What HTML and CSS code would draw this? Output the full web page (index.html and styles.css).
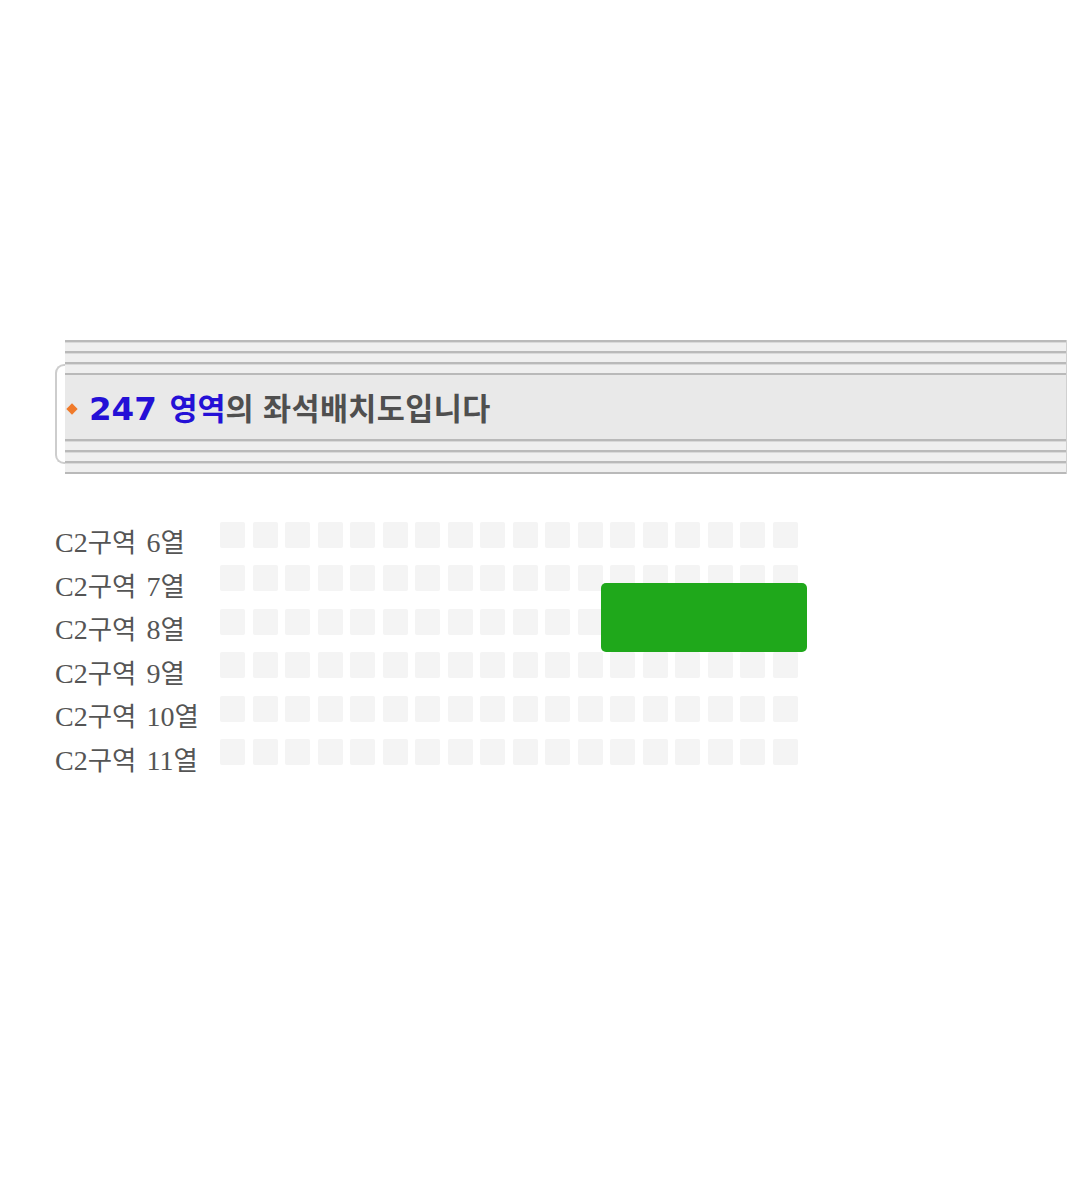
FILE: index.html
```html
<!DOCTYPE html>
<html lang="ko">
<head>
  <meta charset="UTF-8">
  <title>좌석배치도</title>
  <link rel="stylesheet" href="styles.css">
</head>
<body>
  <!-- Area title bar -->
  <div class="area-head">
    <div class="cap"></div>
    <div class="bar">
      <div class="stripes"></div>
      <div class="title">
        <span class="dot"></span>
        <span class="area-name"><span class="num">247</span> 영역</span><span class="rest">의 좌석배치도입니다</span>
      </div>
      <div class="stripes bottom"></div>
    </div>
  </div>

  <!-- Seat rows -->
  <div class="seat-map" id="seat-map">
    <div class="picked"></div>
  </div>

  <script>
    const rows = [6, 7, 8, 9, 10, 11];
    const seatsPerRow = 18;
    const map = document.getElementById('seat-map');

    rows.forEach(row => {
      const line = document.createElement('div');
      line.className = 'seat-row';
      line.innerHTML = `<div class="label">C2<span class="ko">구역</span> ${row}<span class="ko">열</span></div>`;
      const seats = document.createElement('div');
      seats.className = 'seats';
      for (let i = 0; i < seatsPerRow; i++) {
        const s = document.createElement('div');
        s.className = 'seat';
        seats.appendChild(s);
      }
      line.appendChild(seats);
      map.appendChild(line);
    });
  </script>
</body>
</html>
```

FILE: styles.css
```css
body {
  margin: 0;
  background-color: #fff;
  font-family: "Liberation Serif", "Noto Sans CJK KR", serif;
}

/* title bar */
.area-head {
  display: flex;
  margin: 340px 0 0 55px;
  height: 134px;
}
.cap {
  width: 10px;
  position: relative;
}
.cap::before {
  content: "";
  position: absolute;
  left: 0;
  top: 24px;
  width: 8px;
  height: 96px;
  border: 2px solid #cdcdcd;
  border-right: none;
  border-radius: 9px 0 0 9px;
}
.cap::after {
  content: "";
  position: absolute;
  left: 2px;
  top: 35px;
  width: 8px;
  height: 10px;
  background: #fff;
  box-shadow: 0 53px 0 #fff;
}
.bar {
  flex: 1;
  display: flex;
  flex-direction: column;
  border-right: 1px solid #d0d0d0;
}
.stripes {
  height: 33px;
  background: repeating-linear-gradient(to bottom, #b9b9b9 0 2px, #d9d9d9 2px 3px, #efefef 3px 11px);
}
.stripes.bottom {
  border-bottom: 2px solid #b9b9b9;
}
.title {
  height: 65px;
  background-color: #e9e9e9;
  border-top: 2px solid #b9b9b9;
  display: flex;
  align-items: center;
  font-family: "DejaVu Sans", "Noto Sans CJK KR", sans-serif;
  font-size: 30.5px;
}
.dot {
  width: 8px;
  height: 8px;
  background-color: #f07a2a;
  transform: rotate(45deg);
  margin: 4px 13px 0 3px;
}
.area-name {
  color: #2410d6;
  font-weight: bold;
  word-spacing: 2px;
}
.num {
  font-size: 32.5px;
}
.rest {
  color: #4f4f4f;
  font-weight: bold;
  font-family: "Noto Sans CJK KR", sans-serif;
  letter-spacing: 0.4px;
}

/* seats */
.seat-map {
  position: relative;
  margin: 39px 0 0 55px;
}
.seat-row {
  display: flex;
  align-items: center;
  height: 43.5px;
}
.label {
  width: 165px;
  font-size: 28px;
  color: #555;
  margin-top: 12px;
  word-spacing: 3px;
}
.label .ko {
  font-size: 26.5px;
}
.seats {
  display: flex;
  gap: 7.5px;
}
.seat {
  width: 25px;
  height: 26px;
  border-radius: 2px;
  background-color: #f4f4f4;
}
.picked {
  position: absolute;
  left: 546px;
  top: 70px;
  width: 206px;
  height: 69px;
  border-radius: 5px;
  background-color: #1fa81b;
  z-index: 1;
}
```
